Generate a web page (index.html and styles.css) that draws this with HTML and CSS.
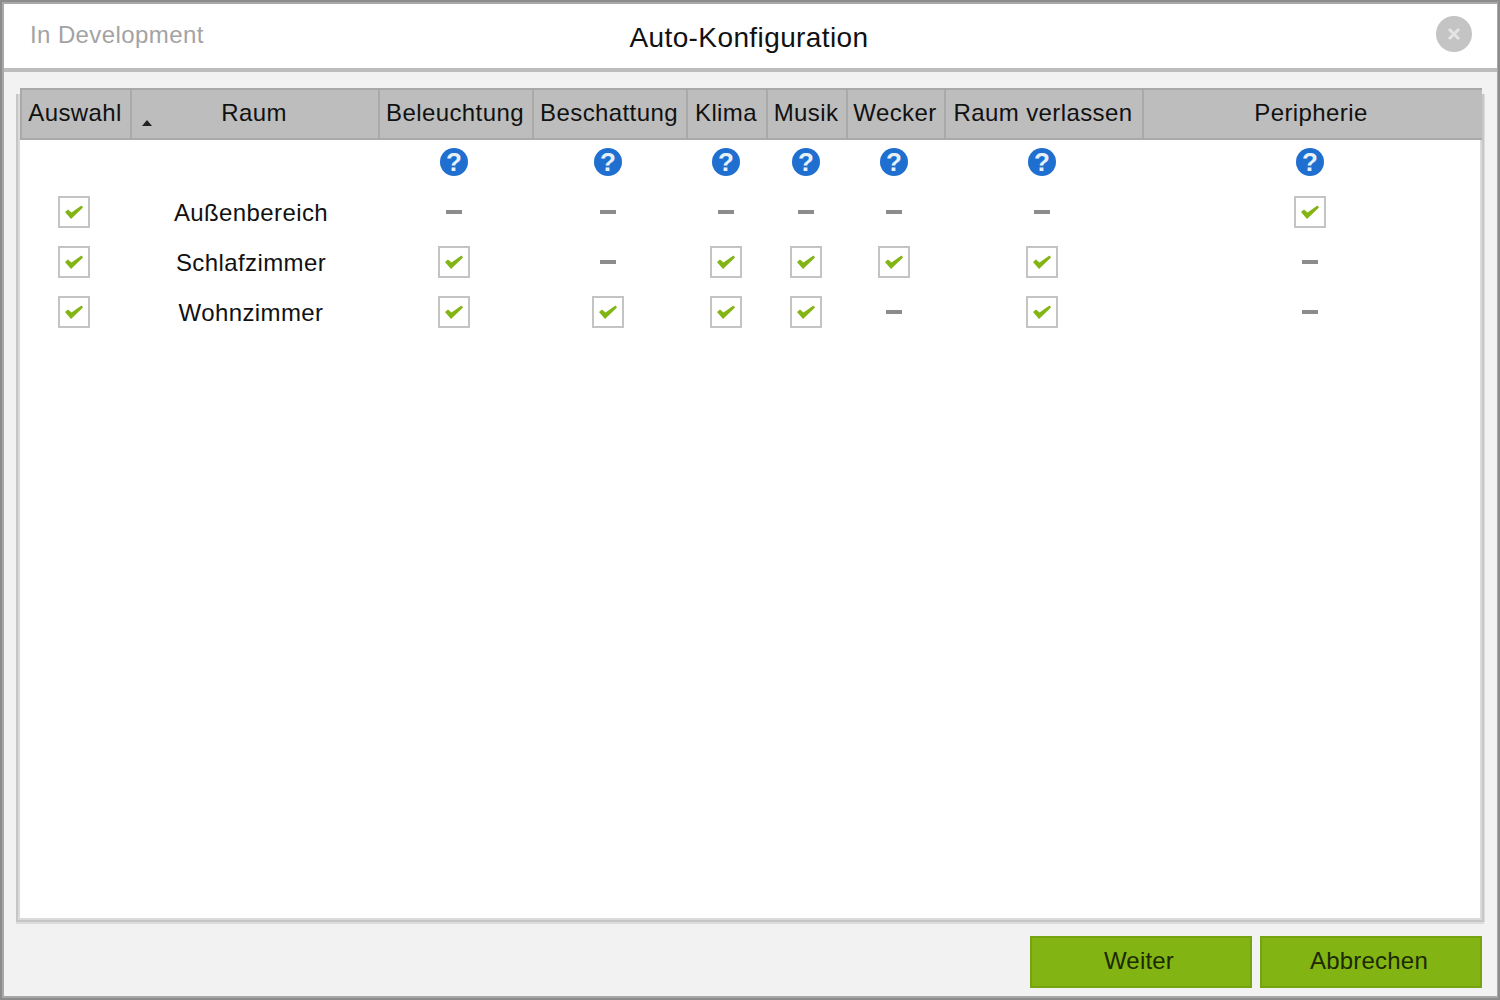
FILE: index.html
```html
<!DOCTYPE html>
<html lang="de">
<head>
<meta charset="utf-8">
<title>Auto-Konfiguration</title>
<link rel="stylesheet" href="styles.css">
</head>
<body>
<svg class="defs" width="0" height="0" aria-hidden="true">
  <symbol id="tick" viewBox="0 0 32 32"><path d="M7 16l3-2.500 3.500 3 10-7 1.500 2-12 11.500z" fill="#82b414"/></symbol>
</svg>
<div class="window">
  <header class="titlebar">
    <span class="status">In Development</span>
    <h1 class="title">Auto-Konfiguration</h1>
    <button class="close" aria-label="Schließen"><svg width="16" height="16" viewBox="0 0 16 16"><path d="M3 3l10 10M13 3L3 13" stroke="#e4e4e4" stroke-width="3"/></svg></button>
  </header>
  <main class="content">
    <section class="frame">
      <div class="thead">
        <div class="th">Auswahl</div>
        <div class="th th-sort"><span class="sort"></span>Raum</div>
        <div class="th">Beleuchtung</div>
        <div class="th">Beschattung</div>
        <div class="th">Klima</div>
        <div class="th">Musik</div>
        <div class="th">Wecker</div>
        <div class="th">Raum verlassen</div>
        <div class="th">Peripherie</div>
      </div>
      <div class="row row-help">
        <div></div><div></div>
        <div class="cell"><span class="help">?</span></div>
        <div class="cell"><span class="help">?</span></div>
        <div class="cell"><span class="help">?</span></div>
        <div class="cell"><span class="help">?</span></div>
        <div class="cell"><span class="help">?</span></div>
        <div class="cell"><span class="help">?</span></div>
        <div class="cell"><span class="help">?</span></div>
      </div>
      <div class="row">
        <div class="cell"><span class="check"><svg><use href="#tick"/></svg></span></div>
        <div class="cell name">Außenbereich</div>
        <div class="cell"><span class="dash"></span></div>
        <div class="cell"><span class="dash"></span></div>
        <div class="cell"><span class="dash"></span></div>
        <div class="cell"><span class="dash"></span></div>
        <div class="cell"><span class="dash"></span></div>
        <div class="cell"><span class="dash"></span></div>
        <div class="cell"><span class="check"><svg><use href="#tick"/></svg></span></div>
      </div>
      <div class="row">
        <div class="cell"><span class="check"><svg><use href="#tick"/></svg></span></div>
        <div class="cell name">Schlafzimmer</div>
        <div class="cell"><span class="check"><svg><use href="#tick"/></svg></span></div>
        <div class="cell"><span class="dash"></span></div>
        <div class="cell"><span class="check"><svg><use href="#tick"/></svg></span></div>
        <div class="cell"><span class="check"><svg><use href="#tick"/></svg></span></div>
        <div class="cell"><span class="check"><svg><use href="#tick"/></svg></span></div>
        <div class="cell"><span class="check"><svg><use href="#tick"/></svg></span></div>
        <div class="cell"><span class="dash"></span></div>
      </div>
      <div class="row">
        <div class="cell"><span class="check"><svg><use href="#tick"/></svg></span></div>
        <div class="cell name">Wohnzimmer</div>
        <div class="cell"><span class="check"><svg><use href="#tick"/></svg></span></div>
        <div class="cell"><span class="check"><svg><use href="#tick"/></svg></span></div>
        <div class="cell"><span class="check"><svg><use href="#tick"/></svg></span></div>
        <div class="cell"><span class="check"><svg><use href="#tick"/></svg></span></div>
        <div class="cell"><span class="dash"></span></div>
        <div class="cell"><span class="check"><svg><use href="#tick"/></svg></span></div>
        <div class="cell"><span class="dash"></span></div>
      </div>
    </section>
    <footer class="actions">
      <button class="btn">Weiter</button>
      <button class="btn">Abbrechen</button>
    </footer>
  </main>
</div>
</body>
</html>
```
FILE: styles.css
```css
* { box-sizing: border-box; }
html, body { margin: 0; height: 100%; }
body {
  font-family: "Liberation Sans", Arial, sans-serif;
  font-size: 24px;
  letter-spacing: 0.4px;
  color: #111;
  overflow: hidden;
}
.defs { position: absolute; }
.window {
  width: 1500px;
  height: 1000px;
  display: flex;
  flex-direction: column;
  background: #f2f2f2;
  border-style: solid;
  border-color: #a8a8a8;
  border-width: 4px 3px 4px 4px;
  outline: 2px solid #8c8c8c;
  outline-offset: -2px;
}
.titlebar {
  height: 68px;
  flex: none;
  background: #fff;
  border-bottom: 4px solid #bdbdbd;
  display: grid;
  grid-template-columns: 1fr auto 1fr;
  align-items: center;
  padding: 0 25px 0 26px;
}
.status { color: #a3a3a3; padding-bottom: 2px; }
.title {
  margin: 0 4px 0 0;
  padding-top: 4px;
  font-size: 28px;
  font-weight: 400;
  letter-spacing: 0.4px;
  color: #111;
}
.close {
  justify-self: end;
  width: 36px;
  height: 36px;
  padding: 0;
  border: 0;
  border-radius: 50%;
  background: #c4c4c4;
  display: flex;
  align-items: center;
  justify-content: center;
  margin-bottom: 4px;
}
.content {
  flex: 1;
  display: flex;
  flex-direction: column;
  padding: 22px 13px 8px 12px;
}
.frame {
  flex: 1;
  background: #fff;
  border: solid #c6c6c6;
  border-width: 0 2px 2px 2px;
  padding: 0 2px 2px 2px;
  box-shadow: inset 0 0 0 2px #dadada, 1px 0 0 #dcdcdc, 0 2px 0 #dcdcdc;
  margin-bottom: 14px;
}
.thead {
  display: grid;
  grid-template-columns: 110px 248px 154px 154px 80px 80px 98px 198px 1fr;
  height: 52px;
  margin-top: -6px;
  margin-right: -2px;
  background: #bdbdbd;
  border: solid #a9a9a9;
  border-width: 2px 0 2px 2px;
}
.th {
  display: flex;
  align-items: center;
  justify-content: center;
  border-right: 2px solid #a9a9a9;
  position: relative;
  white-space: nowrap;
  padding: 0 2px 2px 0;
}
.th:last-child { border-right: 0; padding-right: 4px; }
.sort {
  position: absolute;
  left: 10px;
  top: 30px;
  width: 0;
  height: 0;
  border: 5px solid transparent;
  border-top: 0;
  border-bottom: 6px solid #222;
}
.row {
  display: grid;
  grid-template-columns: 108px 246px 160px 148px 88px 72px 104px 192px 344px;
  height: 50px;
  align-items: center;
  justify-items: center;
}
.row-help { height: 47px; padding-bottom: 3px; }
.cell { display: flex; align-items: center; justify-content: center; white-space: nowrap; }
.name { padding-top: 2px; }
.check {
  width: 32px;
  height: 32px;
  background: #fff;
  border: 2px solid #c4c4c4;
  position: relative;
  display: block;
}
.check svg { position: absolute; left: -2px; top: -2px; width: 32px; height: 32px; }
.dash { width: 16px; height: 4px; background: #8c8c8c; display: block; }
.help {
  width: 28px;
  height: 28px;
  border-radius: 50%;
  background: #1f6fd0;
  color: #e6f0fb;
  font-size: 26px;
  font-weight: 700;
  letter-spacing: 0;
  line-height: 28px;
  text-align: center;
  display: block;
}
.actions { display: flex; justify-content: flex-end; gap: 8px; padding-right: 2px; }
.btn {
  width: 222px;
  height: 52px;
  background: #82b414;
  border: 2px solid #76a312;
  font: inherit;
  letter-spacing: 0.2px;
  color: #1c2a00;
  padding: 0 4px 2px 0;
}
```
